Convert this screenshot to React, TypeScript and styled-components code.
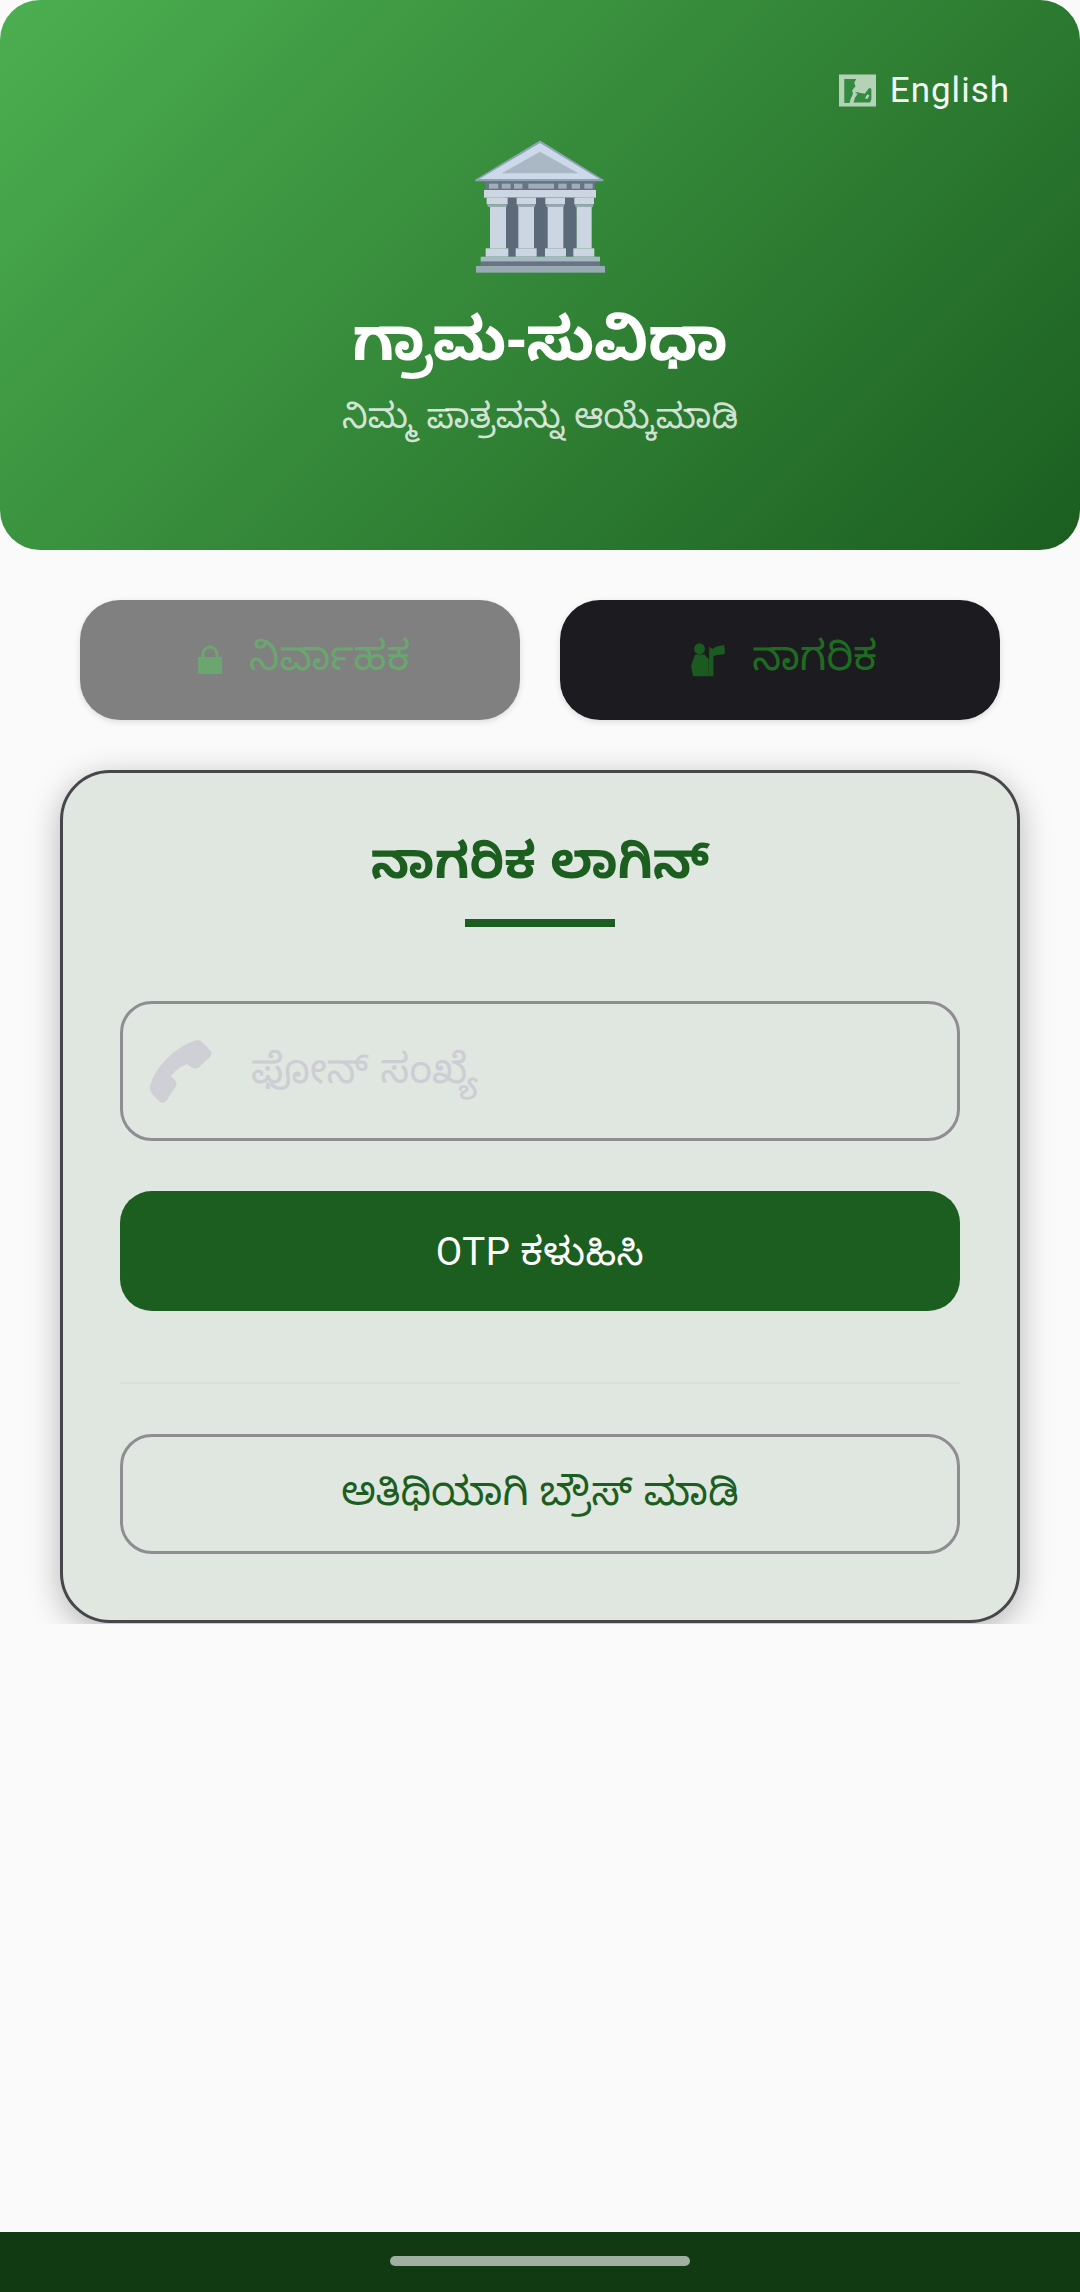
import React from "react";
import styled, { createGlobalStyle } from "styled-components";

const FONT = `"Noto Sans Kannada", "Noto Sans", "Open Sans", Roboto, "DejaVu Sans", sans-serif`;
const LATIN_FONT = `Roboto, "Noto Sans Kannada", "Noto Sans", sans-serif`;

const Global = createGlobalStyle`
  html, body { margin: 0; padding: 0; background: #fafafa; }
  * { box-sizing: border-box; }
  body { font-family: ${FONT}; }
`;

const Page = styled.div`
  width: 1080px;
  height: 2292px;
  display: flex;
  flex-direction: column;
  background: #fafafa;
  overflow: hidden;
`;
const Header = styled.header`
  height: 550px;
  flex: none;
  border-radius: 40px;
  background: linear-gradient(135deg, #4caf50 0%, #1b5e20 100%);
  display: flex;
  flex-direction: column;
  align-items: center;
  padding: 65px 70px 0;
  color: #fff;
`;
const LangRow = styled.div`
  align-self: flex-end;
  height: 50px;
  display: flex;
  align-items: center;
  gap: 14px;
  font-family: ${LATIN_FONT};
  font-size: 35px;
  letter-spacing: 1px;
  color: #f2f8f2;
`;
const Temple = styled.svg`
  width: 200px;
  height: 170px;
  margin-top: 6px;
  display: block;
`;
const AppTitle = styled.h1`
  margin: 19px 0 0;
  font-size: 60px;
  line-height: 84px;
  font-weight: 700;
`;
const Subtitle = styled.p`
  margin: 6px 0 0;
  font-size: 34.7px;
  line-height: 48px;
  color: rgba(255, 255, 255, 0.8);
`;
const Content = styled.div`
  height: 1074px;
  flex: none;
  overflow: hidden;
  display: flex;
  flex-direction: column;
  align-items: center;
  padding-top: 50px;
`;
const RoleRow = styled.div`
  display: flex;
  gap: 40px;
`;
const RoleButton = styled.button<{ $active?: boolean }>`
  width: 440px;
  height: 120px;
  border: 0;
  border-radius: 40px;
  padding: 0 0 0 8px;
  background: ${(p) => (p.$active ? "#1c1b1f" : "#808080")};
  color: ${(p) => (p.$active ? "#1f6b22" : "#6ba56f")};
  box-shadow: 0 2px 6px rgba(0, 0, 0, 0.12);
  display: flex;
  align-items: center;
  justify-content: center;
  gap: 27px;
  font-family: ${FONT};
  font-size: 41px;
`;
const RoleLabel = styled.span`
  padding-top: 8px;
`;
const Card = styled.section`
  width: 960px;
  height: 853px;
  flex: none;
  margin-top: 50px;
  border: 3px solid #46464b;
  border-radius: 50px;
  background: #e0e6e0;
  box-shadow: 0 8px 32px rgba(0, 0, 0, 0.28);
  padding: 67px 57px 0;
  display: flex;
  flex-direction: column;
  align-items: center;
`;
const CardTitle = styled.h2`
  margin: 0;
  font-size: 50px;
  line-height: 64px;
  font-weight: 700;
  color: #1b5e20;
`;
const Underline = styled.div`
  width: 150px;
  height: 8px;
  margin-top: 15px;
  background: #1b5e20;
`;
const Field = styled.label`
  width: 840px;
  height: 140px;
  margin-top: 74px;
  border: 3px solid #8e8e92;
  border-radius: 32px;
  display: flex;
  align-items: center;
  padding: 0 27px;
  gap: 39px;
`;
const FieldInput = styled.input`
  flex: 1;
  min-width: 0;
  border: 0;
  outline: 0;
  padding: 12px 0 0;
  background: transparent;
  font-family: ${FONT};
  font-size: 41px;
  &::placeholder { color: #cdced4; opacity: 1; }
`;
const PrimaryButton = styled.button`
  width: 840px;
  height: 120px;
  margin-top: 50px;
  border: 0;
  border-radius: 32px;
  padding: 12px 0 0;
  background: #1b5e20;
  color: #fff;
  font-family: ${LATIN_FONT};
  font-size: 38.5px;
  letter-spacing: 0.5px;
`;
const Divider = styled.hr`
  width: 840px;
  height: 2px;
  margin: 71px 0 0;
  border: 0;
  background: #dadfda;
`;
const GuestButton = styled.button`
  width: 840px;
  height: 120px;
  margin-top: 50px;
  border: 3px solid #8e8e92;
  border-radius: 32px;
  padding: 12px 0 0;
  background: transparent;
  color: #1b5e20;
  font-family: ${FONT};
  font-size: 40px;
`;
const Spacer = styled.div`
  flex: 1;
`;
const NavBar = styled.div`
  height: 60px;
  flex: none;
  background: #113a13;
  display: flex;
  justify-content: center;
  padding-top: 24px;
`;
const NavHandle = styled.div`
  width: 300px;
  height: 10px;
  border-radius: 5px;
  background: #a0b0a0;
`;

const MapIcon = () => (
  <svg width="37" height="33" viewBox="180 100 112 97">
    <rect x="180" y="100" width="112" height="97" fill="#b4d3b6" />
    <path d="M196 114h36l-6 12 4 10-10 12 2 12-6 12-4 14h-16z" fill="#348a41" />
    <path d="M228 152l18 4 12 2 8-10 6-8 6 4v31l-4 10h-50l4-14 8-12z" fill="#348a41" />
    <path d="M258 172l8-12 6 4-6 10z" fill="#b4d3b6" />
  </svg>
);

const TempleIcon = () => (
  <Temple viewBox="0 0 600 510">
    <path d="M108 178 300 62 488 178z" fill="#8ea3b5" stroke="#8ea3b5" strokeWidth="6" strokeLinejoin="round" />
    <path d="M118 174 300 66 478 174z" fill="#ccd9ea" />
    <path d="M185 157 300 92 415 157z" fill="#a9b8c4" />
    <rect x="135" y="183" width="330" height="24" fill="#66757f" />
    {[[147, 28], [185, 27], [222, 25], [265, 77], [355, 25], [395, 25], [433, 25]].map(([x, w]) => (
      <rect key={x} x={x} y="188" width={w} height="15" fill="#a0aebb" />
    ))}
    <rect x="132" y="207" width="336" height="23" fill="#ccd6e2" />
    <rect x="195" y="230" width="215" height="176" fill="#5b6a78" />
    {[
      [140, 63, 150, 48, 137, 68],
      [230, 58, 235, 47, 227, 63],
      [316, 59, 323, 47, 315, 63],
      [403, 59, 410, 45, 400, 63],
    ].map(([cx, cw, sx, sw, bx, bw]) => (
      <g key={cx}>
        <rect x={cx} y="230" width={cw} height="20" fill="#ccd6e2" />
        <rect x={cx + 3} y="250" width={cw - 6} height="8" fill="#99aab5" />
        <rect x={sx} y="258" width={sw} height="124" fill="#ccd6e2" />
        <rect x={bx} y="382" width={bw} height="25" fill="#ccd6e2" />
      </g>
    ))}
    <rect x="122" y="407" width="358" height="15" fill="#a9b8c6" />
    <rect x="122" y="422" width="358" height="13" fill="#66757f" />
    <rect x="108" y="435" width="387" height="20" fill="#99aab5" />
  </Temple>
);

const LockIcon = () => (
  <svg width="24" height="30" viewBox="0 0 24 30">
    <path d="M5 13V9a7 7 0 0 1 14 0v4" fill="none" stroke="#6ba56f" strokeWidth="3" />
    <rect y="12" width="24" height="17" fill="#6ba56f" />
  </svg>
);

const FarmerIcon = () => (
  <svg width="34" height="34" viewBox="458 190 100 100" fill="#1b5a20">
    <circle cx="483" cy="207" r="16" />
    <path d="M470 224h28l12 14v50H464l-6-30z" />
    <path d="M512 200l10 8 10-8 24-4 2 26-26 4-8 4v58h-14z" />
  </svg>
);

const PhoneIcon = () => (
  <svg width="62" height="63" viewBox="0 0 62 63">
    <path
      d="M44 1C24 8 6 26 0 46c-1 4 1 6 3 9l7 7c3 2 5 0 7-2l9-14c1-2 0-5-2-7l-3-3c4-5 10-10 16-12l4 3c3 2 6 2 8 0l11-10c2-3 2-5 0-7l-8-8c-2-2-5-2-8-1z"
      fill="#cfd0d6"
    />
  </svg>
);

export default function App() {
  return (
    <Page>
      <Global />
      <Header>
        <LangRow>
          <MapIcon />
          <span>English</span>
        </LangRow>
        <TempleIcon />
        <AppTitle>ಗ್ರಾಮ-ಸುವಿಧಾ</AppTitle>
        <Subtitle>ನಿಮ್ಮ ಪಾತ್ರವನ್ನು ಆಯ್ಕೆಮಾಡಿ</Subtitle>
      </Header>
      <Content>
        <RoleRow>
          <RoleButton>
            <LockIcon />
            <RoleLabel>ನಿರ್ವಾಹಕ</RoleLabel>
          </RoleButton>
          <RoleButton $active>
            <FarmerIcon />
            <RoleLabel>ನಾಗರಿಕ</RoleLabel>
          </RoleButton>
        </RoleRow>
        <Card>
          <CardTitle>ನಾಗರಿಕ ಲಾಗಿನ್</CardTitle>
          <Underline />
          <Field>
            <PhoneIcon />
            <FieldInput placeholder="ಫೋನ್ ಸಂಖ್ಯೆ" />
          </Field>
          <PrimaryButton>OTP ಕಳುಹಿಸಿ</PrimaryButton>
          <Divider />
          <GuestButton>ಅತಿಥಿಯಾಗಿ ಬ್ರೌಸ್ ಮಾಡಿ</GuestButton>
        </Card>
      </Content>
      <Spacer />
      <NavBar>
        <NavHandle />
      </NavBar>
    </Page>
  );
}
